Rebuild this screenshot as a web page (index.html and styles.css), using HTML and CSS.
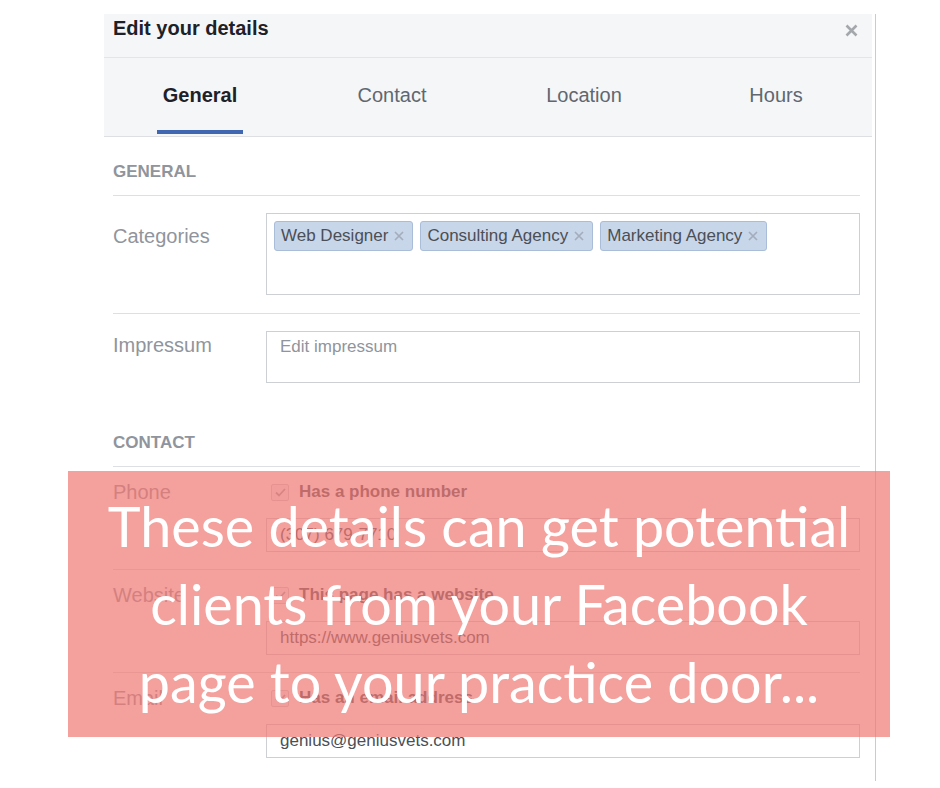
FILE: index.html
```html
<!DOCTYPE html>
<html lang="en">
<head>
<meta charset="utf-8">
<title>Edit your details</title>
<link rel="stylesheet" href="styles.css">
</head>
<body>
<div class="page">
  <div class="dialog">
    <div class="header">
      <div class="title">Edit your details</div>
      <svg class="close" width="13" height="13" viewBox="0 0 13 13"><path d="M1.5 1.5 L11.5 11.5 M11.5 1.5 L1.5 11.5" stroke="#a4a7ab" stroke-width="2.6" stroke-linecap="butt"/></svg>
    </div>
    <div class="tabs">
      <div class="tab active"><span>General</span></div>
      <div class="tab"><span>Contact</span></div>
      <div class="tab"><span>Location</span></div>
      <div class="tab"><span>Hours</span></div>
    </div>
    <div class="content">
      <div class="section-title">General</div>
      <div class="row">
        <div class="label label-cat">Categories</div>
        <div class="tagbox">
          <div class="chip">Web Designer <svg class="x" width="10" height="10" viewBox="0 0 10 10"><path d="M1 1 L9 9 M9 1 L1 9" stroke="#a3adbb" stroke-width="1.7"/></svg></div>
          <div class="chip">Consulting Agency <svg class="x" width="10" height="10" viewBox="0 0 10 10"><path d="M1 1 L9 9 M9 1 L1 9" stroke="#a3adbb" stroke-width="1.7"/></svg></div>
          <div class="chip">Marketing Agency <svg class="x" width="10" height="10" viewBox="0 0 10 10"><path d="M1 1 L9 9 M9 1 L1 9" stroke="#a3adbb" stroke-width="1.7"/></svg></div>
        </div>
      </div>
      <div class="row row-plain">
        <div class="label label-imp">Impressum</div>
        <div class="textarea">Edit impressum</div>
      </div>
      <div class="section-title section-contact">Contact</div>
      <div class="row row-contact">
        <div class="label label-contact">Phone</div>
        <div class="field">
          <div class="check"><span class="box"><svg width="11" height="9" viewBox="0 0 11 9"><path d="M1 4.5 L4 7.5 L10 1" fill="none" stroke="#9ea3ab" stroke-width="1.8"/></svg></span>Has a phone number</div>
          <div class="input">(307) 679-7710</div>
        </div>
      </div>
      <div class="row row-contact">
        <div class="label label-contact">Website</div>
        <div class="field">
          <div class="check"><span class="box"><svg width="11" height="9" viewBox="0 0 11 9"><path d="M1 4.5 L4 7.5 L10 1" fill="none" stroke="#9ea3ab" stroke-width="1.8"/></svg></span>This page has a website</div>
          <div class="input">https://www.geniusvets.com</div>
        </div>
      </div>
      <div class="row row-contact row-last">
        <div class="label label-contact">Email</div>
        <div class="field">
          <div class="check"><span class="box"><svg width="11" height="9" viewBox="0 0 11 9"><path d="M1 4.5 L4 7.5 L10 1" fill="none" stroke="#9ea3ab" stroke-width="1.8"/></svg></span>Has an email address</div>
          <div class="input">genius@geniusvets.com</div>
        </div>
      </div>
    </div>
  </div>
  <div class="overlay">
    <span class="line">These details can get potential</span>
    <span class="line">clients from your Facebook</span>
    <span class="line">page to your practice door...</span>
  </div>
</div>
</body>
</html>
```

FILE: styles.css
```css
html, body {
  margin: 0;
  padding: 0;
  background: #ffffff;
}
body {
  font-family: "Liberation Sans", Arial, sans-serif;
  color: #1d2129;
}
.page {
  position: relative;
  padding: 14px 0 0 104px;
  height: 788px;
  box-sizing: border-box;
  overflow: hidden;
}
.dialog {
  width: 772px;
  min-height: 767px;
  border-right: 1px solid #c3ccd8;
  box-sizing: border-box;
}
.header {
  height: 44px;
  box-sizing: border-box;
  margin-right: 3px;
  background: #f5f6f7;
  border-bottom: 1px solid #e3e5e8;
  display: flex;
  justify-content: space-between;
  align-items: flex-start;
  padding: 3px 14px 0 9px;
}
.title {
  font-size: 20px;
  line-height: 23px;
  font-weight: bold;
  color: #1d2129;
}
.close {
  margin-top: 7px;
}
.tabs {
  display: grid;
  grid-template-columns: repeat(4, 1fr);
  margin-right: 3px;
  height: 79px;
  box-sizing: border-box;
  background: #f5f6f7;
  border-bottom: 1px solid #dddfe2;
}
.tab {
  text-align: center;
  padding-top: 26px;
  font-size: 20px;
  line-height: 23px;
  color: #606770;
}
.tab span {
  display: inline-block;
  padding: 0 6px 23px;
}
.tab.active span {
  font-weight: bold;
  color: #1d2129;
  border-bottom: 4px solid #4267b2;
}
.content {
  padding: 0 15px 0 9px;
}
.section-title {
  font-size: 17px;
  line-height: 20px;
  font-weight: bold;
  text-transform: uppercase;
  color: #90949c;
  padding: 25px 0 13px;
  border-bottom: 1px solid #dddfe2;
}
.section-contact {
  padding-top: 33px;
  padding-bottom: 13px;
}
.row {
  display: flex;
  padding: 17px 0 18px;
  border-bottom: 1px solid #dddfe2;
}
.row-plain {
  border-bottom: none;
  padding-bottom: 17px;
}
.row-contact {
  padding: 15px 0 17px;
}
.row-last {
  border-bottom: none;
}
.label {
  width: 153px;
  flex-shrink: 0;
  font-size: 20px;
  line-height: 23px;
  color: #90949c;
}
.label-cat {
  padding-top: 12px;
}
.label-imp {
  padding-top: 3px;
}
.label-contact {
  line-height: 20px;
}
.tagbox {
  flex: 1;
  height: 82px;
  box-sizing: border-box;
  border: 1px solid #ccd0d5;
  padding: 7px;
  display: flex;
  flex-wrap: wrap;
  align-content: flex-start;
  gap: 7px;
}
.chip {
  height: 30px;
  box-sizing: border-box;
  border: 1px solid #a9bdd9;
  background: #c8d6ea;
  border-radius: 3px;
  padding: 0 8px 0 6px;
  display: flex;
  align-items: center;
  gap: 6px;
  font-size: 17px;
  color: #4b4f56;
  white-space: nowrap;
}
.textarea {
  flex: 1;
  height: 52px;
  box-sizing: border-box;
  border: 1px solid #ccd0d5;
  padding: 5px 13px;
  font-size: 17px;
  line-height: 20px;
  color: #90949c;
}
.field {
  flex: 1;
  display: flex;
  flex-direction: column;
  gap: 16px;
}
.check {
  height: 20px;
  display: flex;
  align-items: center;
  gap: 10px;
  padding-left: 5px;
  font-size: 17px;
  font-weight: bold;
  color: #4b4f56;
}
.box {
  width: 18px;
  height: 17px;
  box-sizing: border-box;
  border: 1px solid #ccd0d5;
  background: #f5f6f7;
  border-radius: 2px;
  display: flex;
  align-items: center;
  justify-content: center;
}
.input {
  height: 34px;
  box-sizing: border-box;
  border: 1px solid #ccd0d5;
  padding: 0 13px;
  font-size: 17px;
  line-height: 32px;
  color: #4b4f56;
}
.overlay {
  position: absolute;
  left: 68px;
  top: 471px;
  width: 822px;
  height: 266px;
  box-sizing: border-box;
  padding-top: 16px;
  background: rgba(239, 119, 115, 0.7);
  color: #ffffff;
  font-family: Lato, "Open Sans", sans-serif;
  font-size: 55.7px;
  line-height: 78px;
  text-align: center;
}
.line {
  display: block;
  white-space: nowrap;
}
```
